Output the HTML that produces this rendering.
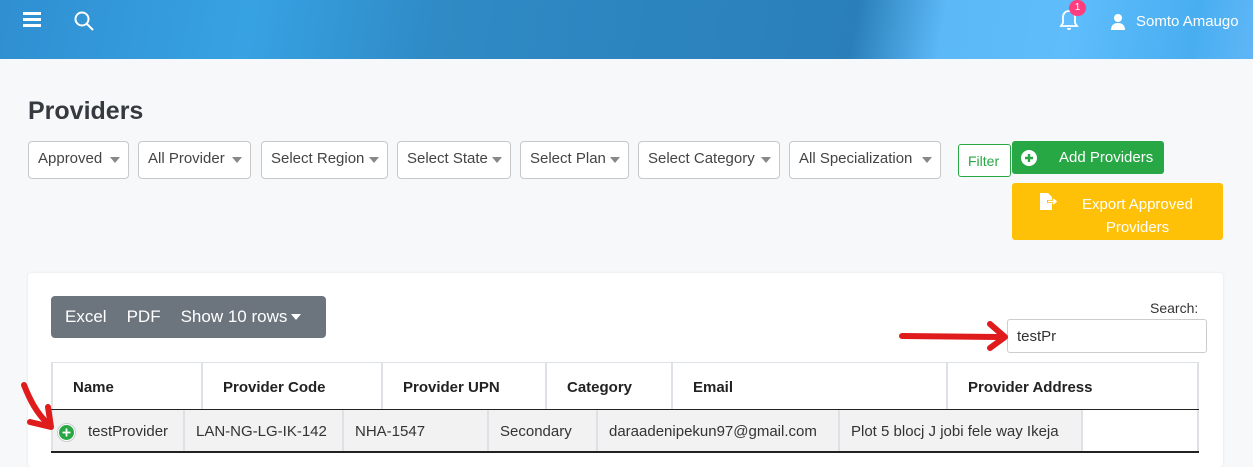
<!DOCTYPE html>
<html><head><style>
*{box-sizing:border-box;margin:0;padding:0}
body{width:1253px;height:467px;overflow:hidden;background:#f7f8fa;font-family:"Liberation Sans",sans-serif;position:relative;color:#333}
.hdr{position:absolute;left:0;top:0;width:1253px;height:59px;background:linear-gradient(100deg,#2f8fd0 0%,#37a2e3 20%,#2f8ac5 35%,#2a7fb9 68%,#5cb8f6 75%,#5fbdfc 85%,#48aef0 95%,#60b6f6 100%)}
.abs{position:absolute}
.sel{position:absolute;top:141px;height:38px;background:#fff;border:1px solid #c8c8c8;border-radius:4px;font-size:15px;color:#444;padding:8px 0 0 9px}
.sel:after{content:"";position:absolute;right:8px;top:15px;border:5px solid transparent;border-top:6px solid #888}
th,td{font-size:15px;text-align:left;white-space:nowrap}
.hc{position:absolute;top:363px;height:47px;border-left:2px solid #dee2e6;font-weight:bold;font-size:15px;padding:16px 0 0 20px;color:#222;background:#fff}
.bc{position:absolute;top:410px;height:42px;border-left:2px solid #dee2e6;font-size:15px;padding:13px 0 0 11px;color:#333;background:#f2f2f2}
</style></head><body>
<div class="hdr"></div>
<div class="abs" style="left:23px;top:12px;width:18px;height:16px">
<div style="height:3px;background:#fff;margin-bottom:3px"></div><div style="height:3px;background:#fff;margin-bottom:3px"></div><div style="height:3px;background:#fff"></div></div>
<svg class="abs" style="left:73px;top:10px" width="22" height="22"><circle cx="9" cy="9" r="6.5" fill="none" stroke="#fff" stroke-width="2"/><line x1="14" y1="14" x2="20" y2="20" stroke="#fff" stroke-width="2"/></svg>
<svg class="abs" style="left:1059px;top:9px" width="20" height="22"><path d="M10 2c-4 0-6 3-6 6v6l-2 3h16l-2-3V8c0-3-2-6-6-6z" fill="none" stroke="#fff" stroke-width="1.8"/><path d="M8 19a2 2 0 0 0 4 0" fill="#fff"/></svg>
<div class="abs" style="left:1069px;top:0px;width:17px;height:16px;border-radius:8px;background:#ff3d7f;color:#fff;font-size:10px;text-align:center;line-height:16px">1</div>
<svg class="abs" style="left:1111px;top:13px" width="14" height="17"><circle cx="7" cy="5" r="4" fill="#fff"/><path d="M0 17c0-5 3-7 7-7s7 2 7 7z" fill="#fff"/></svg>
<div class="abs" style="left:1136px;top:13px;color:#fff;font-size:15px">Somto Amaugo</div>
<div class="abs" style="left:28px;top:97px;font-size:25px;font-weight:bold;color:#343a40">Providers</div>
<div class="sel" style="left:28px;width:101px">Approved</div>
<div class="sel" style="left:138px;width:113px">All Provider</div>
<div class="sel" style="left:261px;width:127px">Select Region</div>
<div class="sel" style="left:397px;width:114px">Select State</div>
<div class="sel" style="left:520px;width:109px">Select Plan</div>
<div class="sel" style="left:638px;width:142px">Select Category</div>
<div class="sel" style="left:789px;width:152px">All Specialization</div>
<div class="abs" style="left:958px;top:144px;width:53px;height:33px;border:1px solid #28a745;border-radius:3px;color:#28a745;font-size:14px;padding:8px 0 0 9px;background:#fff">Filter</div>
<div class="abs" style="left:1012px;top:141px;width:152px;height:33px;background:#28a745;border-radius:3px;color:#fff;font-size:15px;padding:8px 0 0 47px">Add Providers</div>
<svg class="abs" style="left:1021px;top:150px" width="16" height="16"><circle cx="8" cy="8" r="8" fill="#fff"/><path d="M8 4v8M4 8h8" stroke="#28a745" stroke-width="2.4"/></svg>
<div class="abs" style="left:1012px;top:183px;width:211px;height:57px;background:#ffc107;border-radius:3px;color:#fff;font-size:15px;text-align:center;padding:10px 0 0 40px;line-height:23px">Export Approved<br>Providers</div>
<svg class="abs" style="left:1039px;top:193px" width="19" height="17"><path d="M1 0h8l4 4v3H8v3h5v7H1z" fill="#fff"/><path d="M9 8.5h7M14 6l3 2.5-3 2.5" stroke="#fff" stroke-width="1.6" fill="none"/></svg>
<div class="abs" style="left:28px;top:273px;width:1195px;height:194px;background:#fff;border-radius:4px;box-shadow:0 0 3px rgba(0,0,0,.08)"></div>
<div class="abs" style="left:51px;top:296px;width:275px;height:42px;background:#6c757d;border-radius:4px;color:#fff;font-size:17px;padding:11px 0 0 14px;word-spacing:0">Excel<span style="margin-left:20px">PDF</span><span style="margin-left:20px">Show 10 rows</span><span style="display:inline-block;margin-left:4px;border:5px solid transparent;border-top:6px solid #fff;vertical-align:middle;margin-top:4px"></span></div>
<div class="abs" style="left:1150px;top:300px;font-size:14px;color:#333">Search:</div>
<div class="abs" style="left:1007px;top:319px;width:200px;height:34px;border:1px solid #ccc;border-radius:3px;font-size:15px;padding:8px 0 0 9px;background:#fff">testPr</div>
<div class="abs" style="left:51px;top:362px;width:1148px;height:1px;background:#dee2e6"></div>
<div class="hc" style="left:51px;width:150px">Name</div>
<div class="hc" style="left:201px;width:180px">Provider Code</div>
<div class="hc" style="left:381px;width:164px">Provider UPN</div>
<div class="hc" style="left:545px;width:126px">Category</div>
<div class="hc" style="left:671px;width:275px">Email</div>
<div class="hc" style="left:946px;width:253px;border-right:2px solid #dee2e6">Provider Address</div>
<div class="abs" style="left:51px;top:409px;width:1148px;height:2px;background:#222"></div>
<div class="bc" style="left:51px;width:132px;padding-left:35px">testProvider</div>
<div class="bc" style="left:183px;width:159px">LAN-NG-LG-IK-142</div>
<div class="bc" style="left:342px;width:145px">NHA-1547</div>
<div class="bc" style="left:487px;width:109px">Secondary</div>
<div class="bc" style="left:596px;width:242px">daraadenipekun97@gmail.com</div>
<div class="bc" style="left:838px;width:243px">Plot 5 blocj J jobi fele way Ikeja</div>
<div class="bc" style="left:1081px;width:118px;background:#fff;border-right:2px solid #dee2e6"></div>
<div class="abs" style="left:51px;top:451px;width:1148px;height:2px;background:#222"></div>
<svg class="abs" style="left:57px;top:423px" width="19" height="19"><circle cx="9.5" cy="9.5" r="9" fill="#fff" stroke="#ccc"/><circle cx="9.5" cy="9.5" r="7.5" fill="#28a745"/><path d="M9.5 5.5v8M5.5 9.5h8" stroke="#fff" stroke-width="1.8"/></svg>
<svg class="abs" style="left:0;top:0" width="1253" height="467" style="pointer-events:none">
<path d="M24 385 C30 400 36 412 48 424" stroke="#e01b1b" stroke-width="6" fill="none" stroke-linecap="round"/>
<path d="M51 427 L30 422 M51 427 L48 407" stroke="#e01b1b" stroke-width="6" fill="none" stroke-linecap="round"/>
<path d="M902 336 L998 337" stroke="#e01b1b" stroke-width="6" fill="none" stroke-linecap="round"/>
<path d="M1005 337 L990 324 M1005 337 L990 348" stroke="#e01b1b" stroke-width="6" fill="none" stroke-linecap="round"/>
</svg>
</body></html>
